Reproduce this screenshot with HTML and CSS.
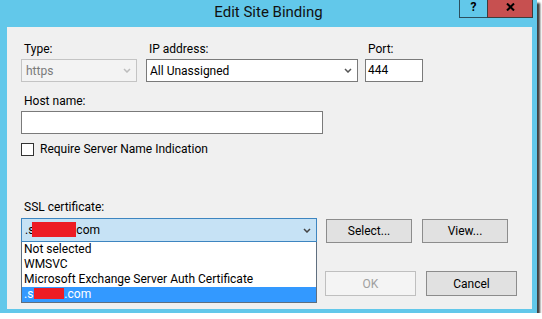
FILE: index.html
```html
<!DOCTYPE html>
<html>
<head>
<meta charset="utf-8">
<title>Edit Site Binding</title>
<link rel="stylesheet" href="styles.css">
</head>
<body>
<div class="window">
  <div class="titlebar">
    <div class="tb-spacer"></div>
    <div class="title">Edit Site Binding</div>
    <div class="tb-controls">
      <div class="tb-help">?</div>
      <div class="tb-close">
        <svg width="9" height="8" viewBox="0 0 9 8"><path d="M1 0.5 L8 7.5 M8 0.5 L1 7.5" stroke="#000" stroke-width="2" fill="none"/></svg>
      </div>
    </div>
  </div>
  <div class="panel">
    <div class="row1">
      <div class="field f-type">
        <label class="lbl">Type:</label>
        <div class="combo disabled"><span>https</span>
          <svg class="chev" width="8" height="5" viewBox="0 0 8 5"><path d="M1 1 L4 4 L7 1" fill="none" stroke-width="1.5"/></svg>
        </div>
      </div>
      <div class="field f-ip">
        <label class="lbl">IP address:</label>
        <div class="combo"><span>All Unassigned</span>
          <svg class="chev" width="8" height="5" viewBox="0 0 8 5"><path d="M1 1 L4 4 L7 1" fill="none" stroke-width="1.5"/></svg>
        </div>
      </div>
      <div class="field f-port">
        <label class="lbl">Port:</label>
        <div class="textbox">444</div>
      </div>
    </div>
    <div class="field f-host">
      <label class="lbl">Host name:</label>
      <div class="textbox host-box"></div>
    </div>
    <div class="check-row">
      <span class="checkbox"></span>
      <span class="check-label">Require Server Name Indication</span>
    </div>
    <div class="field f-ssl">
      <label class="lbl">SSL certificate:</label>
      <div class="ssl-row">
        <div class="ssl-wrap">
          <div class="combo focused"><span>.s<span class="redact r1"></span>com</span>
            <svg class="chev" width="8" height="5" viewBox="0 0 8 5"><path d="M1 1 L4 4 L7 1" fill="none" stroke-width="1.5"/></svg>
          </div>
          <ul class="droplist">
            <li>Not selected</li>
            <li>WMSVC</li>
            <li>Microsoft Exchange Server Auth Certificate</li>
            <li class="sel">.s<span class="redact r2"></span>.com</li>
          </ul>
        </div>
        <button class="btn btn-select">Select...</button>
        <button class="btn btn-view">View...</button>
      </div>
    </div>
    <div class="footer">
      <button class="btn btn-foot disabled">OK</button>
      <button class="btn btn-foot">Cancel</button>
    </div>
  </div>
</div>
</body>
</html>
```

FILE: styles.css
```css
body {
  margin: 0;
  background: #ffffff;
  font-family: Roboto, "Open Sans", sans-serif;
  font-size: 12px;
  color: #000;
}

.window {
  width: 537px;
  height: 313px;
  background: #62c8ea;
  display: flex;
  flex-direction: column;
  box-shadow: 3px 3px 2px rgba(0, 0, 0, 0.75);
}

.titlebar {
  height: 27px;
  flex: none;
  display: grid;
  grid-template-columns: 1fr auto 1fr;
}

.title {
  font-size: 15px;
  line-height: 24px;
  color: #111;
}

.tb-controls {
  justify-self: end;
  align-self: start;
  display: flex;
  margin-right: 4px;
}

.tb-help {
  width: 28px;
  height: 18px;
  box-sizing: border-box;
  border-left: 1px solid #2c4f5e;
  border-bottom: 1px solid #2c4f5e;
  font-weight: bold;
  font-size: 12px;
  line-height: 15px;
  text-align: center;
}

.tb-close {
  width: 46px;
  height: 18px;
  box-sizing: border-box;
  background: #c75050;
  border: 1px solid #3d3d3d;
  border-top: none;
  display: flex;
  align-items: center;
  justify-content: center;
  padding-bottom: 3px;
}

.panel {
  flex: 1;
  margin: 0 5px 4px 7px;
  background: #f0f0f0;
  padding: 15px 15px 0 14px;
  position: relative;
}

.lbl {
  display: block;
  line-height: 15px;
  margin: 0 0 2px 3px;
}

.row1 {
  display: flex;
  align-items: flex-end;
}

.f-type { width: 116px; }
.f-ip { width: 212px; margin-left: 9px; }
.f-port { width: 58px; margin-left: 7px; }

.combo {
  height: 23px;
  box-sizing: border-box;
  border: 1px solid #7a7a7a;
  background: #fff;
  display: flex;
  align-items: center;
  justify-content: space-between;
  padding: 0 5px 0 3px;
  white-space: nowrap;
}

.chev { stroke: #555; }

.combo.disabled {
  border-color: #c4c4c4;
  background: #f3f3f3;
  color: #7a7a7a;
  padding-left: 4px;
}

.combo.disabled .chev { stroke: #bdbdbd; }

.textbox {
  height: 23px;
  box-sizing: border-box;
  border: 1px solid #7a7a7a;
  background: #fff;
  padding: 0 2px;
  line-height: 21px;
}

.f-host { margin-top: 12px; }
.host-box { width: 302px; }

.check-row {
  margin-top: 8px;
  height: 15px;
  display: flex;
  align-items: center;
}

.checkbox {
  width: 13px;
  height: 13px;
  box-sizing: border-box;
  border: 1px solid #333;
  background: #fff;
}

.check-label { margin-left: 6px; line-height: 15px; }

.f-ssl { margin-top: 43px; }
.f-ssl .lbl { margin-bottom: 3px; }

.ssl-row {
  display: flex;
  align-items: flex-start;
}

.ssl-wrap {
  width: 296px;
  position: relative;
}

.combo.focused {
  height: 24px;
  background: #c6e2f5;
  border-color: #3d85c0;
}

.combo.focused .chev { stroke: #444; }

.redact {
  display: inline-block;
  background: #ed1c24;
  vertical-align: middle;
}

.r1 { width: 44px; height: 15px; margin-left: -2px; margin-top: -2px; }
.r2 { width: 30px; height: 11px; margin-left: 1px; margin-top: -2px; }

.droplist {
  position: absolute;
  top: 24px;
  left: 0;
  width: 296px;
  height: 61px;
  box-sizing: border-box;
  margin: 0;
  padding: 0;
  list-style: none;
  background: #fff;
  border: 1px solid #5f6f7f;
  border-top: none;
  z-index: 2;
}

.droplist li {
  line-height: 15px;
  height: 15px;
  padding-left: 2px;
  white-space: nowrap;
}

.droplist li.sel {
  background: #3399ff;
  color: #fff;
}

.btn {
  font-family: Roboto, "Open Sans", sans-serif;
  font-size: 12px;
  color: #000;
  background: #e1e1e1;
  border: 1px solid #8c8c8c;
  box-sizing: border-box;
  padding: 0;
  margin: 0;
}

.btn-select { width: 86px; height: 24px; margin-left: 9px; margin-top: 1px; }
.btn-view { width: 86px; height: 24px; margin-left: 10px; margin-top: 1px; }

.footer {
  margin-top: 28px;
  display: flex;
  justify-content: flex-end;
  gap: 10px;
}

.btn-foot { width: 91px; height: 25px; }

.btn.disabled {
  background: #f4f4f4;
  border-color: #bfbfbf;
  color: #a0a0a0;
}
```
